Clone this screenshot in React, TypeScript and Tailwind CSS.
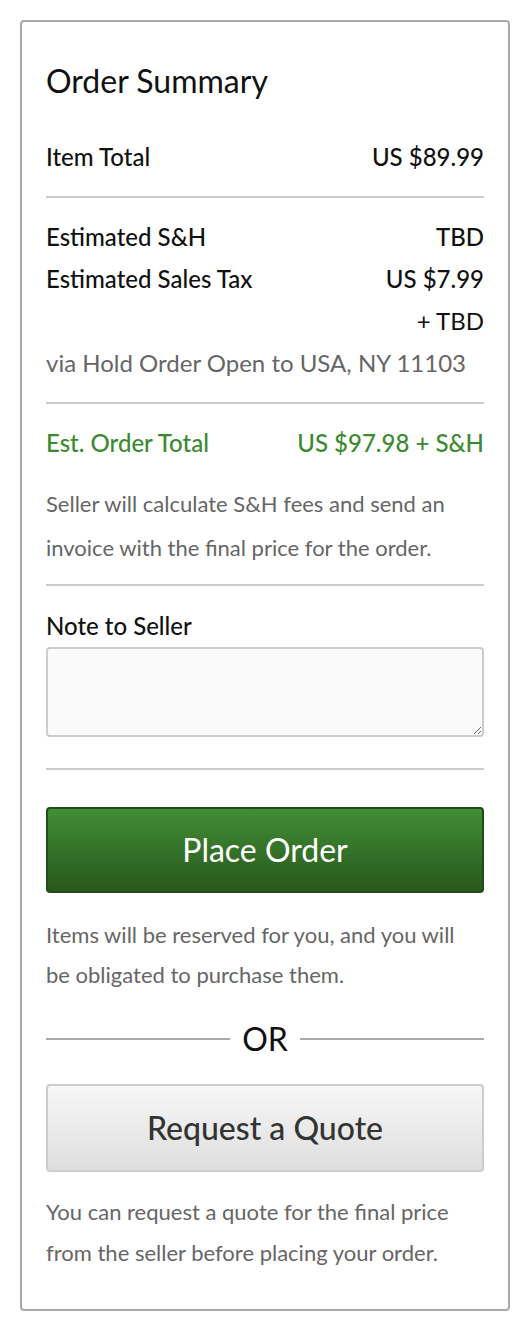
export default function App() {
  const font = { fontFamily: "Lato, 'Noto Sans', sans-serif" };
  return (
    <div className="min-h-[1330px] bg-white pt-[20px]" style={font}>
      <div className="ml-[20px] mr-[18px] rounded-[4px] border-2 border-[#aaaaaa] px-[24px] pt-[42px] pb-[36px]">
        <h2 className="text-[32px] leading-[34px] font-normal text-[#111]">Order Summary</h2>

        {/* Item total */}
        <div className="mt-[38px] flex justify-between text-[24px] leading-[42px] font-medium text-[#111]">
          <span>Item Total</span>
          <span>US $89.99</span>
        </div>
        <div className="mt-[18px] h-[2px] bg-[#cccccc]" />

        {/* Shipping & tax */}
        <div className="mt-[18px] text-[24px] leading-[42px]">
          <div className="flex justify-between font-medium text-[#111]">
            <span>Estimated S&amp;H</span>
            <span>TBD</span>
          </div>
          <div className="flex justify-between font-medium text-[#111]">
            <span>Estimated Sales Tax</span>
            <span>US $7.99</span>
          </div>
          <div className="text-right text-[#111]">+ TBD</div>
          <div className="text-[#666]">via Hold Order Open to USA, NY 11103</div>
        </div>
        <div className="mt-[18px] h-[2px] bg-[#cccccc]" />

        {/* Total */}
        <div className="mt-[18px] flex justify-between text-[24px] leading-[42px] font-medium text-[#3b8a2f]">
          <span>Est. Order Total</span>
          <span>US $97.98 + S&amp;H</span>
        </div>
        <p className="mt-[18px] text-[22px] leading-[44px] text-[#666]">
          Seller will calculate S&amp;H fees and send an invoice with the final price for the order.
        </p>
        <div className="mt-[14px] h-[2px] bg-[#cccccc]" />

        {/* Note */}
        <label className="mt-[19px] block text-[24px] leading-[42px] font-medium text-[#111]">Note to Seller</label>
        <textarea className="block h-[90px] w-full rounded-[4px] border-2 border-[#cccccc] bg-[#fafafa] p-2 text-[18px] outline-none" />
        <div className="mt-[31px] h-[2px] bg-[#cccccc]" />

        {/* Place order */}
        <button className="mt-[37px] flex h-[86px] w-full items-center justify-center rounded-[4px] border-2 border-[#1f4d18] bg-gradient-to-b from-[#428e36] to-[#28581d] text-[32px] text-white">
          Place Order
        </button>
        <p className="mt-[22px] text-[22px] leading-[40px] text-[#666]">
          Items will be reserved for you, and you will be obligated to purchase them.
        </p>

        {/* OR */}
        <div className="mt-[24px] flex items-center gap-[12px] text-[32px] leading-[40px] text-[#111]">
          <div className="h-[2px] flex-1 bg-[#aaaaaa]" />
          <span>OR</span>
          <div className="h-[2px] flex-1 bg-[#aaaaaa]" />
        </div>

        <button className="mt-[25px] flex h-[88px] w-full items-center justify-center rounded-[4px] border-2 border-[#cccccc] bg-gradient-to-b from-[#f7f7f7] to-[#dedede] text-[32px] font-medium text-[#333]">
          Request a Quote
        </button>
        <p className="mt-[19px] text-[22px] leading-[41px] text-[#666]">
          You can request a quote for the final price from the seller before placing your order.
        </p>
      </div>
    </div>
  );
}
